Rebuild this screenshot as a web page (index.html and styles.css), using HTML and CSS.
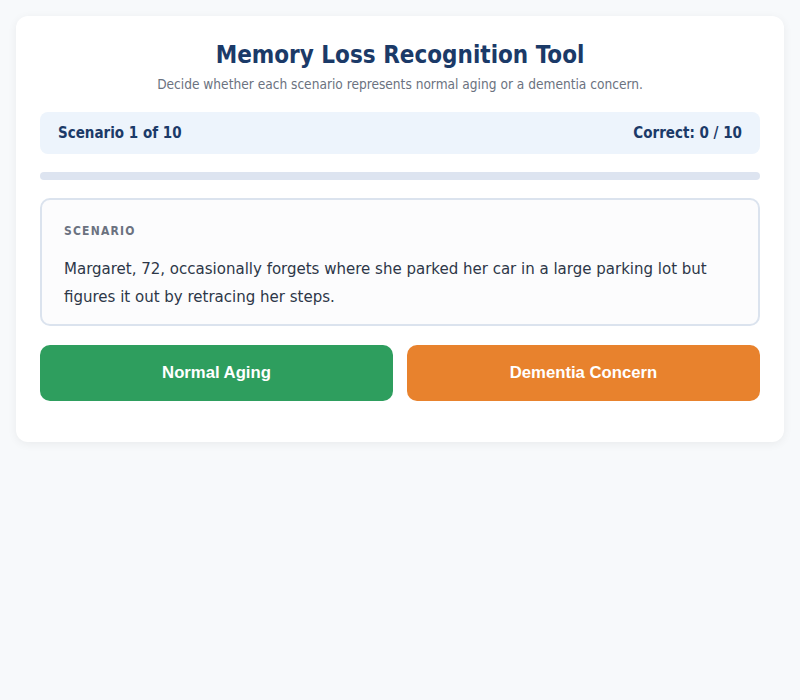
FILE: index.html
```html
<!DOCTYPE html>
<html>
<head>
<meta charset="utf-8">
<link rel="stylesheet" href="styles.css">
</head>
<body>
<div class="card">
  <h1 class="title">Memory Loss Recognition Tool</h1>
  <p class="subtitle">Decide whether each scenario represents normal aging or a dementia concern.</p>
  <div class="status">
    <span>Scenario 1 of 10</span>
    <span>Correct: 0 / 10</span>
  </div>
  <div class="progress"><div class="progress-fill" style="width:0%"></div></div>
  <div class="scenario">
    <div class="label">SCENARIO</div>
    <p class="text">Margaret, 72, occasionally forgets where she parked her car in a large parking lot but figures it out by retracing her steps.</p>
  </div>
  <div class="buttons">
    <button class="btn normal">Normal Aging</button>
    <button class="btn dementia">Dementia Concern</button>
  </div>
</div>
</body>
</html>
```
FILE: styles.css
```css
html, body {
  margin: 0;
  padding: 0;
  background: #f7f9fb;
}
body {
  padding: 16px;
  font-family: "DejaVu Sans Condensed", "DejaVu Sans", sans-serif;
}
.card {
  background: #ffffff;
  border-radius: 12px;
  box-shadow: 0 2px 10px rgba(0, 0, 0, 0.06);
  padding: 24px 24px 41px;
}
.title {
  margin: 0;
  text-align: center;
  font-size: 24px;
  line-height: 30px;
  color: #1b3a68;
  font-weight: bold;
}
.subtitle {
  margin: 5px 0 0;
  text-align: center;
  font-size: 13.6px;
  line-height: 18px;
  color: #6b7280;
}
.status {
  margin-top: 19px;
  height: 42px;
  background: #edf4fc;
  border-radius: 8px;
  display: flex;
  justify-content: space-between;
  align-items: center;
  padding: 0 18px;
  font-weight: bold;
  font-size: 15px;
  color: #1b3a68;
}
.progress {
  margin-top: 18px;
  height: 8px;
  border-radius: 4px;
  background: #dde4f0;
  overflow: hidden;
}
.progress-fill {
  height: 100%;
  background: #2e9e5e;
}
.scenario {
  margin-top: 18px;
  border: 2px solid #dbe3ee;
  border-radius: 10px;
  background: #fcfcfd;
  padding: 22px 22px 14px;
}
.label {
  font-size: 12px;
  font-weight: bold;
  letter-spacing: 1.2px;
  color: #6b7280;
  line-height: 18px;
}
.text {
  margin: 14px 0 0;
  font-size: 16.7px;
  line-height: 28px;
  color: #2d3748;
}
.buttons {
  margin-top: 19px;
  display: grid;
  grid-template-columns: 1fr 1fr;
  gap: 14px;
}
.btn {
  height: 56px;
  border: none;
  border-radius: 10px;
  color: #ffffff;
  font-family: "Liberation Sans", Arial, sans-serif;
  font-weight: bold;
  font-size: 16.7px;
  cursor: pointer;
}
.normal { background: #2e9e5e; }
.dementia { background: #e8822d; }
```
